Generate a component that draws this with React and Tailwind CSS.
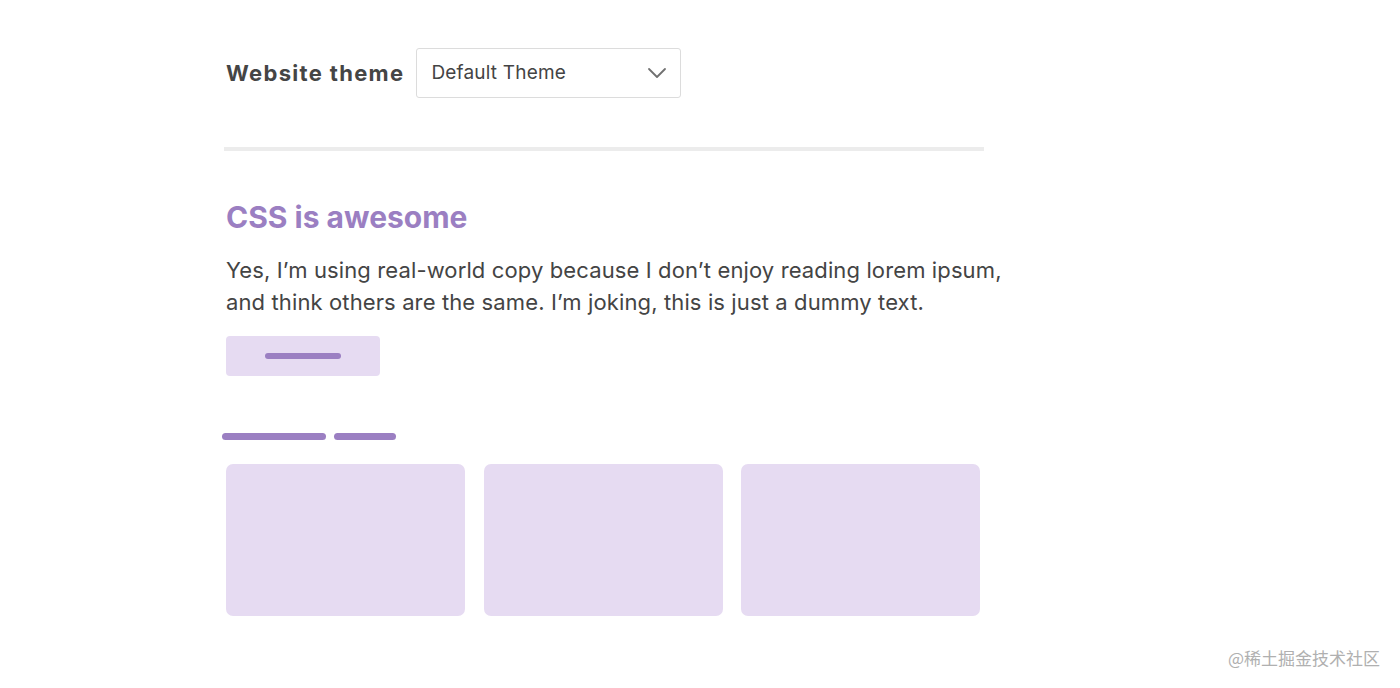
export default function App() {
  return (
    <div className="relative h-[688px] w-[1400px] overflow-hidden bg-white font-['Inter',sans-serif] text-[#444]">
      <div className="ml-[224px] w-[760px] pt-[48px]">
        <div className="flex items-center pl-[2px]">
          <label className="mr-[12px] text-[22px] font-bold tracking-[0.06em] text-[#454545]">Website theme</label>
          <div className="flex h-[50px] w-[265px] items-center justify-between rounded-[3px] border border-[#dcdcdc] pl-[14px] pr-[13px]">
            <span className="text-[19px] tracking-[0.01em] text-[#444]">Default Theme</span>
            <svg width="20" height="12" viewBox="0 0 20 12" fill="none" stroke="#707070" strokeWidth="1.8" strokeLinecap="round" strokeLinejoin="round">
              <path d="M2 2l8 8 8-8" />
            </svg>
          </div>
        </div>

        <div className="mt-[49px] h-[4px] w-[760px] bg-[#ececec]" />

        <div className="pl-[2px]">
          <h2 className="mt-[48px] text-[30px] font-bold leading-[36px] text-[#9b7fc2]">CSS is awesome</h2>
          <p className="mt-[19px] w-[790px] text-[22px] leading-[32px] tracking-[0.12px] text-[#444]">
            Yes, I’m using real-world copy because I don’t enjoy reading lorem ipsum, and think others are the same. I’m joking, this is just a dummy text.
          </p>
          <div className="mt-[18px] flex h-[40px] w-[154px] items-center justify-center rounded-[4px] bg-[#e6dbf2]">
            <span className="h-[6px] w-[76px] rounded-full bg-[#9b7fc2]" />
          </div>
        </div>

        <div className="-ml-[2px] mt-[57px] flex gap-[8px]">
          <span className="h-[7px] w-[104px] rounded-full bg-[#9b7fc2]" />
          <span className="h-[7px] w-[62px] rounded-full bg-[#9b7fc2]" />
        </div>

        <div className="mt-[24px] flex gap-[18.5px] pl-[2px]">
          <div className="h-[152px] w-[239px] rounded-[7px] bg-[#e6dbf2]" />
          <div className="h-[152px] w-[239px] rounded-[7px] bg-[#e6dbf2]" />
          <div className="h-[152px] w-[239px] rounded-[7px] bg-[#e6dbf2]" />
        </div>
      </div>

      <div className="absolute bottom-[18px] right-[20px] font-['Noto_Sans_CJK_SC',sans-serif] text-[17px] text-[#b0b0b0]">
        @稀土掘金技术社区
      </div>
    </div>
  )
}
